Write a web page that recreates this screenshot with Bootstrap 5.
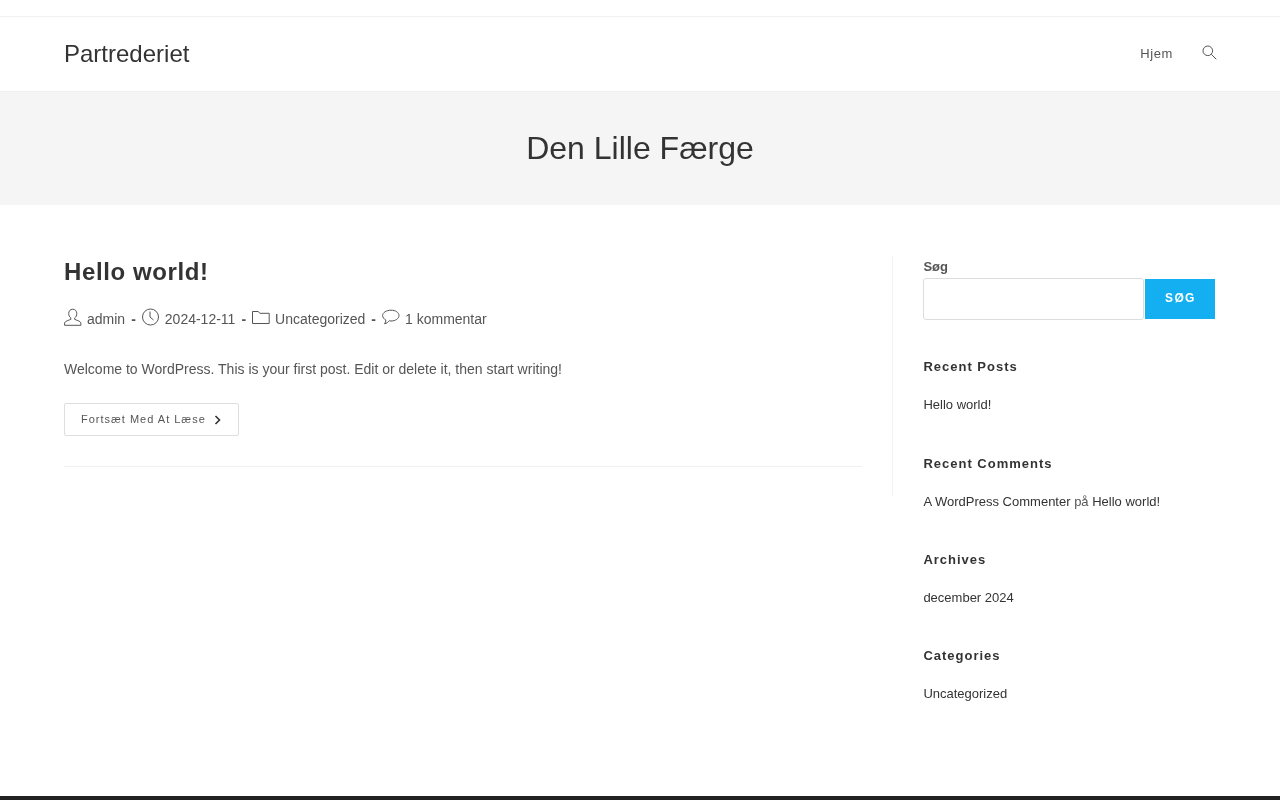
<!DOCTYPE html>
<html lang="da">
<head>
<meta charset="utf-8">
<title>Den Lille Færge</title>
<link rel="stylesheet" href="https://cdn.jsdelivr.net/npm/bootstrap@5.3.0/dist/css/bootstrap.min.css">
<style>
html,body{height:100%}
body{font-family:"Liberation Sans",Arial,sans-serif;color:#555;font-size:14px;line-height:1.8;background:#fff;overflow:hidden}
a{color:inherit;text-decoration:none}
.page-wrap{height:800px;will-change:transform}
.top-strip{height:17px;border-bottom:1px solid #f1f1f1}
.site-head{height:75px;padding:0 64px;border-bottom:1px solid #f1f1f1}
.brand-name{font-size:24px;color:#333;line-height:1}
.menu-link{font-size:13px;letter-spacing:.6px;color:#555;line-height:1;margin-bottom:2px}
.search-ico{margin-left:29px;margin-right:-1px;width:15px;height:15px;color:#555;margin-bottom:4px}
.hero-band{height:113px;background:#f5f5f5;color:#333}
.hero-band h1{font-size:32px;font-weight:400;line-height:1.4;margin:0;color:#333}
.main-zone{padding:51px 64px 0}
.post-col{width:829px;height:240px;padding-right:30px;border-right:1px solid #f1f1f1}
.side-col{width:323px;padding-left:30.4px}
.post-title{font-size:24px;font-weight:700;letter-spacing:.6px;color:#333;line-height:1.3;margin:0 0 20px}
.meta-row{font-size:14px;line-height:25px;color:#555;margin-bottom:25px;height:25px}
.meta-row svg{width:18px;height:18px;margin-right:5px;position:relative;top:-3px;color:#555}
.meta-dash{margin:0 6px;font-weight:700}
.post-text{margin:0 0 21px;line-height:25px;color:#555}
.more-btn{display:inline-flex;align-items:center;height:33px;padding:0 17px 0 16px;border:1px solid #dedede;border-radius:2px;font-size:11px;letter-spacing:1px;color:#555;background:#fff}
.more-btn svg{width:7px;height:10px;margin-left:8px}
.post-rule{border-top:1px solid #f1f1f1;margin-top:30px;width:798px}
.field-label{font-size:13px;font-weight:700;color:#555;line-height:1;margin:4px 0 5px}
.search-input{width:220.500px;height:42px;border:1px solid #ddd;border-radius:3px;background:#fff}
.search-btn{width:70px;height:40px;margin-left:1.500px;background:#13aff0;color:#fff;border:0;font-size:12px;font-weight:700;letter-spacing:1.300px;padding:0}
.widget-block{margin-top:38px}
.first-block{margin-top:37px}
.wide-gap{margin-top:39px}
.widget-name{font-size:13px;font-weight:700;letter-spacing:1px;color:#333;line-height:20px;margin:0 0 18px}
.widget-text{font-size:13px;line-height:20px;color:#555;margin:0}
.widget-text a{color:#333}
.end-bar{position:fixed;left:0;right:0;bottom:0;height:4px;background:#222}
</style>
</head>
<body>
<div class="page-wrap">
  <div class="top-strip"></div>
  <header class="site-head d-flex justify-content-between align-items-center">
    <a class="brand-name" href="#">Partrederiet</a>
    <nav class="d-flex align-items-center">
      <a class="menu-link" href="#">Hjem</a>
      <svg class="search-ico" viewBox="0 0 15 15" fill="none" stroke="currentColor" stroke-width="1"><circle cx="5.8" cy="5.8" r="4.8"/><path d="M9.300 9.300l5 5"/></svg>
    </nav>
  </header>
  <section class="hero-band d-flex align-items-center justify-content-center">
    <h1>Den Lille Færge</h1>
  </section>
  <main class="main-zone d-flex">
    <div class="post-col">
      <h2 class="post-title">Hello world!</h2>
      <div class="meta-row d-flex align-items-center">
        <svg viewBox="0 0 18 18" fill="none" stroke="currentColor" stroke-width="1"><path d="M8.700 1.200c-2.500 0-4 1.900-4 4.400 0 1.900.8 3.400 2.100 4.300v1.500c-1.900.8-5.600 1.600-6.200 3.500v2.400h16.300v-2.400c-.6-1.900-4.300-2.700-6.200-3.500V9.900c1.300-.9 2.100-2.400 2.100-4.300 0-2.500-1.600-4.400-4.100-4.400z"/></svg><a href="#">admin</a><span class="meta-dash">-</span>
        <svg viewBox="0 0 18 18" fill="none" stroke="currentColor" stroke-width="1"><circle cx="8.500" cy="9" r="8"/><path d="M8 3.500V9l3.500 3"/></svg><a href="#">2024-12-11</a><span class="meta-dash">-</span>
        <svg viewBox="0 0 18 18" fill="none" stroke="currentColor" stroke-width="1"><path d="M.5 15.500V3.500h5.800l1.500 1.800h9.400v10.200z"/></svg><a href="#">Uncategorized</a><span class="meta-dash">-</span>
        <svg viewBox="0 0 18 18" fill="none" stroke="currentColor" stroke-width="1"><path d="M9 2.200C4.500 2.200.6 4.500.6 7.500c0 1.900 1.300 3.500 3.300 4.500 0 1.200-.6 2.700-1.300 3.800 1.900-.4 3.500-1.600 4.600-3 .6.100 1.200.2 1.800.2 4.500 0 8-2.500 8-5.500S13.500 2.200 9 2.200z"/></svg><a href="#">1 kommentar</a>
      </div>
      <p class="post-text">Welcome to WordPress. This is your first post. Edit or delete it, then start writing!</p>
      <a class="more-btn" href="#">Fortsæt Med At Læse<svg viewBox="0 0 7 10" fill="none" stroke="#333" stroke-width="1.600"><path d="M1.500 1l4 4-4 4"/></svg></a>
      <div class="post-rule"></div>
    </div>
    <aside class="side-col">
      <div class="field-label">Søg</div>
      <form class="d-flex align-items-center" onsubmit="return false">
        <input class="search-input" type="search" aria-label="Søg">
        <button class="search-btn" type="submit">SØG</button>
      </form>
      <div class="first-block"><h3 class="widget-name">Recent Posts</h3><p class="widget-text"><a href="#">Hello world!</a></p></div>
      <div class="wide-gap"><h3 class="widget-name">Recent Comments</h3><p class="widget-text"><a href="#">A WordPress Commenter</a> på <a href="#">Hello world!</a></p></div>
      <div class="widget-block"><h3 class="widget-name">Archives</h3><p class="widget-text"><a href="#">december 2024</a></p></div>
      <div class="widget-block"><h3 class="widget-name">Categories</h3><p class="widget-text"><a href="#">Uncategorized</a></p></div>
    </aside>
  </main>
</div>
<div class="end-bar"></div>
<script src="https://cdn.jsdelivr.net/npm/bootstrap@5.3.0/dist/js/bootstrap.bundle.min.js"></script>
</body>
</html>
